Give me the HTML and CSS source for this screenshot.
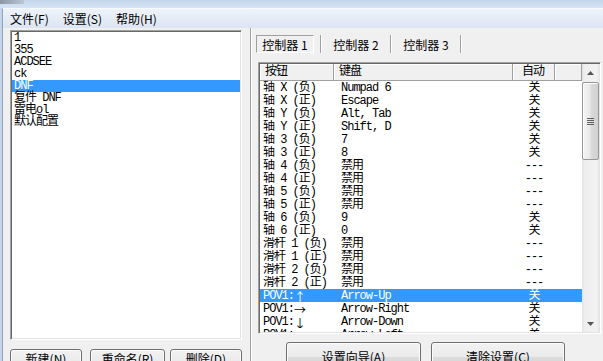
FILE: index.html
```html
<!DOCTYPE html>
<html>
<head>
<meta charset="utf-8">
<link rel="stylesheet" href="styles.css">
</head>
<body>
<div class="title"><div class="title-icon"></div></div>
<div class="window">
  <div class="menubar">
    <span class="mi">文件(F)</span><span class="mi">设置(S)</span><span class="mi">帮助(H)</span>
  </div>
  <div class="main">
    <div class="left">
      <div class="listbox">
        <div class="li">1</div>
        <div class="li">355</div>
        <div class="li">ACDSEE</div>
        <div class="li">ck</div>
        <div class="li sel">DNF</div>
        <div class="li">复件 DNF</div>
        <div class="li">雷电ol</div>
        <div class="li">默认配置</div>
      </div>
      <div class="lbtns">
        <div class="btn lb1">新建(N)</div>
        <div class="btn lb2">重命名(R)</div>
        <div class="btn lb3">删除(D)</div>
      </div>
    </div>
    <div class="split"></div>
    <div class="right">
      <div class="tabs">
        <div class="tab active">控制器 1</div>
        <div class="tsep"></div>
        <div class="tab">控制器 2</div>
        <div class="tsep"></div>
        <div class="tab">控制器 3</div>
        <div class="tsep"></div>
      </div>
      <div class="lv">
        <div class="lvbody">
          <div class="hdr">
            <div class="hc h1">按钮</div>
            <div class="hc h2">键盘</div>
            <div class="hc h3">自动</div>
            <div class="hc h4"></div>
          </div>
          <div class="rows">
            <div class="row"><span class="c1">轴 X (负)</span><span class="c2">Numpad 6</span><span class="c3">关</span></div>
            <div class="row"><span class="c1">轴 X (正)</span><span class="c2">Escape</span><span class="c3">关</span></div>
            <div class="row"><span class="c1">轴 Y (负)</span><span class="c2">Alt, Tab</span><span class="c3">关</span></div>
            <div class="row"><span class="c1">轴 Y (正)</span><span class="c2">Shift, D</span><span class="c3">关</span></div>
            <div class="row"><span class="c1">轴 3 (负)</span><span class="c2">7</span><span class="c3">关</span></div>
            <div class="row"><span class="c1">轴 3 (正)</span><span class="c2">8</span><span class="c3">关</span></div>
            <div class="row"><span class="c1">轴 4 (负)</span><span class="c2">禁用</span><span class="c3">---</span></div>
            <div class="row"><span class="c1">轴 4 (正)</span><span class="c2">禁用</span><span class="c3">---</span></div>
            <div class="row"><span class="c1">轴 5 (负)</span><span class="c2">禁用</span><span class="c3">---</span></div>
            <div class="row"><span class="c1">轴 5 (正)</span><span class="c2">禁用</span><span class="c3">---</span></div>
            <div class="row"><span class="c1">轴 6 (负)</span><span class="c2">9</span><span class="c3">关</span></div>
            <div class="row"><span class="c1">轴 6 (正)</span><span class="c2">0</span><span class="c3">关</span></div>
            <div class="row"><span class="c1">滑杆 1 (负)</span><span class="c2">禁用</span><span class="c3">---</span></div>
            <div class="row"><span class="c1">滑杆 1 (正)</span><span class="c2">禁用</span><span class="c3">---</span></div>
            <div class="row"><span class="c1">滑杆 2 (负)</span><span class="c2">禁用</span><span class="c3">---</span></div>
            <div class="row"><span class="c1">滑杆 2 (正)</span><span class="c2">禁用</span><span class="c3">---</span></div>
            <div class="row sel"><span class="c1">POV1:<span class="ar">↑</span></span><span class="c2">Arrow-Up</span><span class="c3">关</span></div>
            <div class="row"><span class="c1">POV1:<span class="ar">→</span></span><span class="c2">Arrow-Right</span><span class="c3">关</span></div>
            <div class="row"><span class="c1">POV1:<span class="ar">↓</span></span><span class="c2">Arrow-Down</span><span class="c3">关</span></div>
            <div class="row"><span class="c1">POV1:<span class="ar">←</span></span><span class="c2">Arrow-Left</span><span class="c3">关</span></div>
          </div>
        </div>
        <div class="vs">
          <div class="sbbtn"><svg width="7" height="4" viewBox="0 0 7 4"><polygon points="0,4 3.5,0 7,4" fill="#555"/></svg></div>
          <div class="thumb"><div class="grip"></div></div>
          <div class="track"></div>
          <div class="sbbtn"><svg width="7" height="4" viewBox="0 0 7 4"><polygon points="0,0 7,0 3.5,4" fill="#555"/></svg></div>
        </div>
      </div>
      <div class="rbtns">
        <div class="btn rb rb1">设置向导(A)</div>
        <div class="btn rb rb2">清除设置(C)</div>
      </div>
    </div>
  </div>
</div>
</body>
</html>
```
FILE: styles.css
```css
* { box-sizing: border-box; }
html, body { margin: 0; padding: 0; }
body {
  width: 603px;
  height: 361px;
  overflow: hidden;
  background: #f0f0f0;
  font: 12px "Noto Sans CJK SC", "Liberation Sans", sans-serif;
  color: #000;
}
.title {
  height: 8px;
  background: linear-gradient(#c4d6ec, #d6e4f4);
  display: flex;
}
.title-icon {
  width: 24px;
  height: 4px;
  background: linear-gradient(90deg, #8c97a4, #b9c6d6);
}
.window {
  height: 353px;
  border-left: 2px solid #c6d6ea;
  display: flex;
  flex-direction: column;
}
.menubar {
  height: 20px;
  flex: none;
  border-left: 1px solid #94a3b7;
  border-top: 1px solid #f6f9fd;
  background: linear-gradient(#eef3fa, #dbe5f2);
  display: flex;
  line-height: 19px;
}
.mi { padding: 0 7px; }
.main {
  flex: 1;
  min-height: 0;
  display: flex;
  border-left: 1px solid #94a3b7;
  background: #f0f0f0;
}
.left {
  width: 247px;
  flex: none;
  padding: 2px 8px 0 7px;
  display: flex;
  flex-direction: column;
}
.listbox, .lv {
  background: #fff;
  border: 1px solid;
  border-color: #a0a0a0 #fff #fff #a0a0a0;
  padding: 1px;
  box-shadow: inset 1px 1px #696969, inset -1px -1px #e3e3e3;
}
.listbox {
  height: 310px;
  flex: none;
  font: 12px "Liberation Mono", "Noto Sans CJK SC", monospace;
  letter-spacing: -1px;
}
.li {
  height: 12px;
  padding: 1px 0 0 2px;
  line-height: 11px;
  white-space: pre;
}
.li.sel { background: #3399ff; color: #fff; }
.lbtns { display: flex; margin-top: 9px; }
.btn {
  height: 23px;
  border: 1px solid #707070;
  border-radius: 3px;
  background: linear-gradient(#f2f2f2 0%, #ebebeb 50%, #dddddd 51%, #cfcfcf 100%);
  box-shadow: inset 0 0 0 1px #fbfbfb;
  text-align: center;
  line-height: 17px;
  white-space: nowrap;
}
.lb1 { width: 72px; }
.lb2 { width: 75px; margin-left: 8px; }
.lb3 { width: 72px; margin-left: 5px; }
.split {
  width: 2px;
  flex: none;
  border-left: 1px solid #a0a0a0;
  border-right: 1px solid #fff;
}
.right {
  flex: 1;
  padding: 7px 0 0 4px;
  display: flex;
  flex-direction: column;
}
.tabs { display: flex; height: 18px; flex: none; }
.tab {
  width: 68px;
  text-align: center;
  line-height: 19px;
  white-space: nowrap;
}
.tab.active {
  width: 58px;
  margin-right: 6px;
  line-height: 17px;
  border: 1px solid;
  border-color: #a0a0a0 #fff #fff #a0a0a0;
}
.tsep {
  width: 2px;
  border-left: 1px solid #a0a0a0;
  border-right: 1px solid #fff;
}
.lv {
  margin: 9px 0 0 2px;
  width: 343px;
  height: 272px;
  flex: none;
  display: flex;
  font: 12px "Liberation Mono", "Noto Sans CJK SC", monospace;
  letter-spacing: -1px;
}
.lvbody {
  width: 322px;
  display: flex;
  flex-direction: column;
  overflow: hidden;
}
.hdr { display: flex; height: 17px; flex: none; }
.hc {
  height: 17px;
  border-right: 1px solid #a0a0a0;
  border-bottom: 1px solid #a0a0a0;
  box-shadow: inset 1px 1px #fff;
  background: #f0f0f0;
  padding: 2px 0 0 5px;
  line-height: 13px;
}
.h1 { width: 74px; }
.h2 { width: 179px; }
.h3 { width: 42px; padding-left: 9px; }
.h4 { width: 27px; }
.rows { flex: 1; overflow: hidden; }
.row {
  display: flex;
  height: 13px;
  padding-top: 2px;
  line-height: 11px;
  white-space: pre;
  overflow: hidden;
}
.row.sel { background: #3399ff; color: #fff; }
.c1 { width: 74px; padding-left: 3px; }
.c2 { width: 179px; padding-left: 7px; }
.c3 { width: 42px; text-align: center; }
.ar {
  display: inline-block;
  height: 11px;
  line-height: 11px;
  font-family: "Noto Sans CJK SC", sans-serif;
  letter-spacing: 0;
  vertical-align: top;
}
.vs {
  width: 17px;
  display: flex;
  flex-direction: column;
  background: linear-gradient(90deg, #e3e3e3, #eeeeee 15%, #f2f2f2 85%, #e8e8e8);
}
.sbbtn {
  height: 17px;
  flex: none;
  display: flex;
  align-items: center;
  justify-content: center;
}
.thumb {
  height: 78px;
  flex: none;
  margin: 1px 0 0 0;
  border: 1px solid #979797;
  border-radius: 2px;
  background: linear-gradient(90deg, #f4f4f4, #e9e9e9 45%, #dadada 55%, #d0d0d0);
  box-shadow: inset 1px 1px #fcfcfc;
  display: flex;
  align-items: center;
  justify-content: center;
}
.grip {
  width: 7px;
  height: 7px;
  background: repeating-linear-gradient(#5f5f5f 0 1px, transparent 1px 2px);
}
.track { flex: 1; }
.rbtns { display: flex; margin-top: 8px; padding-left: 30px; }
.rb { height: 29px; line-height: 27px; }
.rb1 { width: 135px; }
.rb2 { width: 134px; margin-left: 10px; }
```
